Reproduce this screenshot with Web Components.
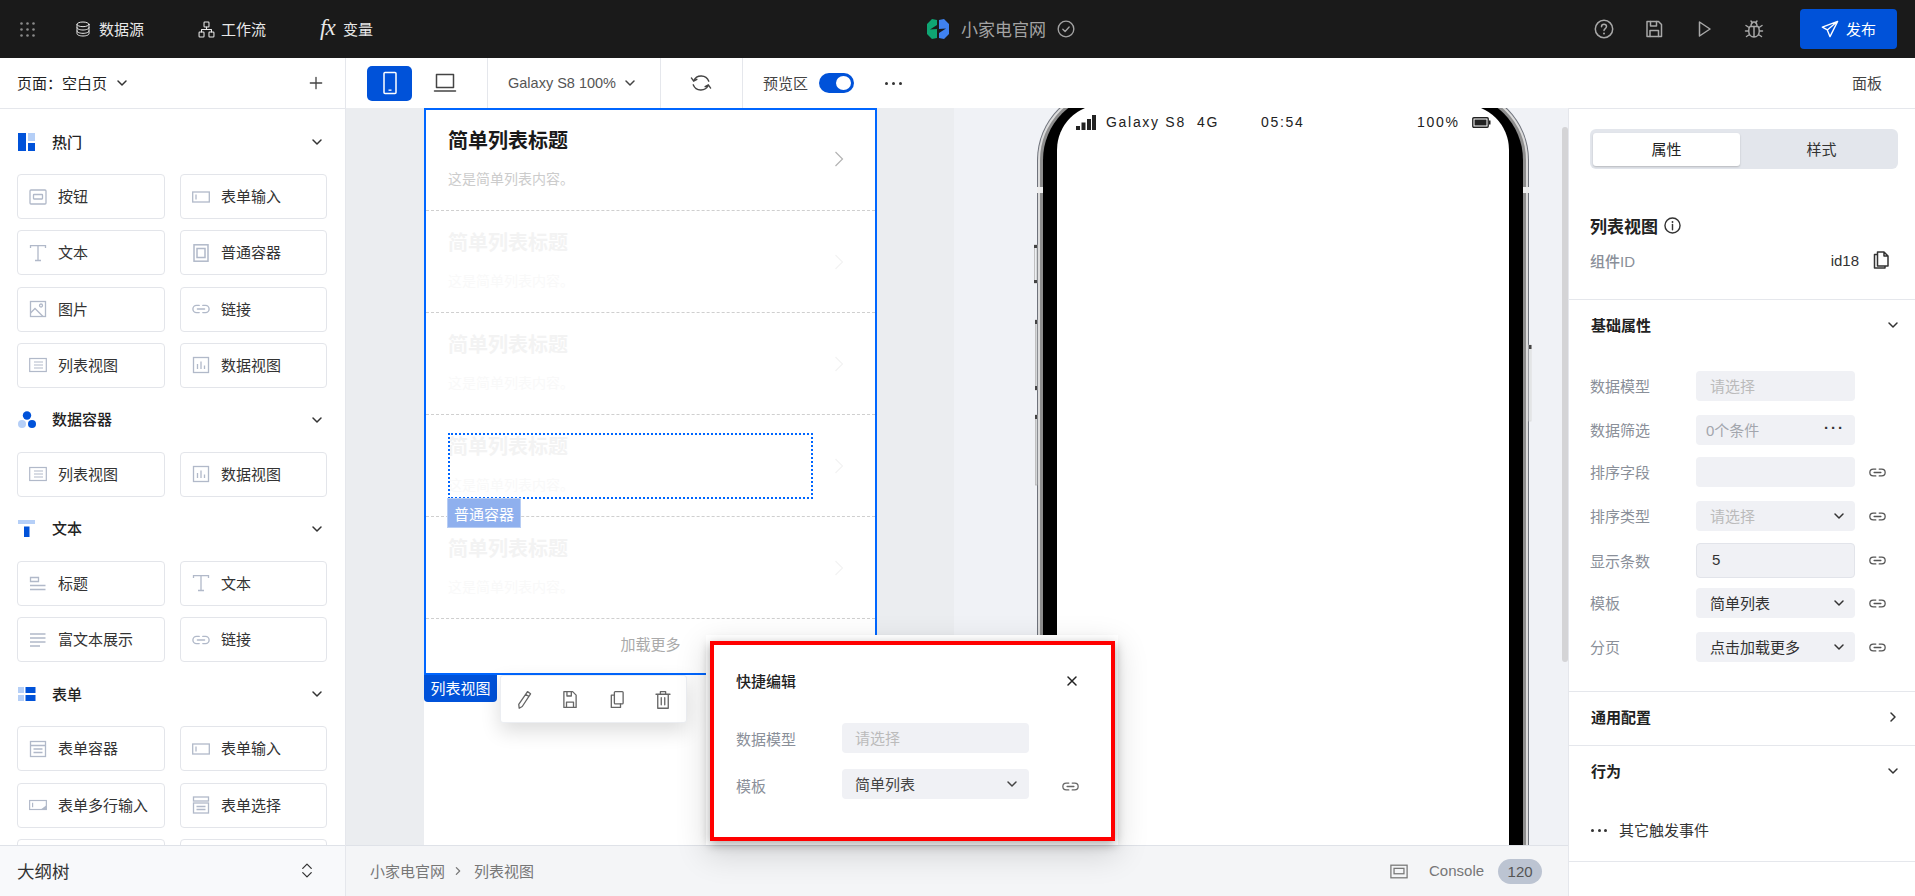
<!DOCTYPE html>
<html lang="zh"><head><meta charset="utf-8"><title>小家电官网</title>
<style>
html,body{margin:0;padding:0;width:1915px;height:896px;overflow:hidden;background:#fff;
font-family:"Liberation Sans","Noto Sans CJK SC",sans-serif;font-size:15px;color:#333}
</style></head><body>
<app-shell>
  <app-header></app-header>
  <tool-row></tool-row>
  <work-row>
    <comp-palette>
      <pal-section label="热门" icon="hot">
        <pal-card icon="btn">按钮</pal-card><pal-card icon="input">表单输入</pal-card>
        <pal-card icon="text">文本</pal-card><pal-card icon="box">普通容器</pal-card>
        <pal-card icon="image">图片</pal-card><pal-card icon="link">链接</pal-card>
        <pal-card icon="list">列表视图</pal-card><pal-card icon="chart">数据视图</pal-card>
      </pal-section>
      <pal-section label="数据容器" icon="data">
        <pal-card icon="list">列表视图</pal-card><pal-card icon="chart">数据视图</pal-card>
      </pal-section>
      <pal-section label="文本" icon="tt">
        <pal-card icon="title">标题</pal-card><pal-card icon="text">文本</pal-card>
        <pal-card icon="rich">富文本展示</pal-card><pal-card icon="link">链接</pal-card>
      </pal-section>
      <pal-section label="表单" icon="form">
        <pal-card icon="formbox">表单容器</pal-card><pal-card icon="input">表单输入</pal-card>
        <pal-card icon="area">表单多行输入</pal-card><pal-card icon="select">表单选择</pal-card>
        <pal-card></pal-card><pal-card></pal-card>
      </pal-section>
    </comp-palette>
    <center-col>
      <design-canvas>
        <list-view slot="list">
          <list-item></list-item><list-item ghost></list-item><list-item ghost></list-item><list-item ghost></list-item><list-item ghost></list-item>
        </list-view>
        <phone-frame slot="phone"></phone-frame>
      </design-canvas>
      <bottom-bar></bottom-bar>
      <quick-edit></quick-edit>
    </center-col>
    <prop-panel>
      <prop-row label="数据模型" value="请选择" kind="ph" gap="0"></prop-row>
      <prop-row label="数据筛选" value="0个条件" kind="more" gap="14"></prop-row>
      <prop-row label="排序字段" value="" kind="ph" gap="12" bind></prop-row>
      <prop-row label="排序类型" value="请选择" kind="phsel" gap="14" bind></prop-row>
      <prop-row label="显示条数" value="5" kind="num" gap="12" bind></prop-row>
      <prop-row label="模板" value="简单列表" kind="sel" gap="10" bind></prop-row>
      <prop-row label="分页" value="点击加载更多" kind="sel" gap="14" bind></prop-row>
    </prop-panel>
  </work-row>
</app-shell>
<script>
const S='fill="none" stroke="currentColor" stroke-width="1.5" stroke-linecap="round" stroke-linejoin="round"';
const I={
 grid:[15,15,()=>{let o='';for(let y of[1.5,7.5,13.5])for(let x of[1.5,7.5,13.5])o+=`<circle cx="${x}" cy="${y}" r="1.3" fill="currentColor"/>`;return o}],
 db:[24,24,`<g ${S} stroke-width="2.200"><ellipse cx="12" cy="5" rx="9" ry="3.500"/><path d="M3 5v14c0 1.900 4 3.500 9 3.500s9-1.600 9-3.500V5M3 10c0 1.900 4 3.500 9 3.500s9-1.600 9-3.500M3 15c0 1.900 4 3.500 9 3.500s9-1.600 9-3.500"/></g>`],
 flow:[24,24,`<g ${S} stroke-width="2.200"><rect x="8.500" y="1.500" width="7" height="7" rx="1"/><rect x="1.500" y="15.500" width="7" height="7" rx="1"/><rect x="15.500" y="15.500" width="7" height="7" rx="1"/><path d="M12 8.500v3.500M5 15.500V12h14v3.500"/></g>`],
 logo:[24,20,`<path d="M6 0 11 1V6L4 10.500 11 10V19L6 20 1 15V5Z" fill="#0fa573"/><path d="M18 20 13 19V14L20 9.500 13 10V1L18 0 23 5V15Z" fill="#3f82f0"/>`],
 check:[20,20,`<g ${S} stroke-width="1.300"><circle cx="10" cy="10" r="8.700"/><path d="M6.500 10.200 9 12.700l4.500-5"/></g>`],
 help:[20,20,`<g ${S} stroke-width="1.400"><circle cx="10" cy="10" r="8.700"/><path d="M7.500 7.800c0-1.500 1.100-2.500 2.500-2.500s2.500 1 2.500 2.300c0 2-2.500 2-2.500 4"/></g><circle cx="10" cy="14.500" r="1" fill="currentColor"/>`],
 save:[20,20,`<g ${S} stroke-width="1.800"><path d="M3 2.500h11.500l3 3v12H3z"/><path d="M6.500 2.500v4.500h6V2.500M6 17.500v-6h8.500v6"/></g>`],
 play:[20,20,`<path d="M5.500 3 16 10 5.500 17z" ${S} stroke-width="1.400"/>`],
 bug:[20,20,`<g ${S} stroke-width="1.400"><path d="M6 7.500h8c1 1 1.300 2.500 1.300 4.500 0 3.500-2.300 6-5.300 6s-5.300-2.500-5.300-6c0-2 .3-3.500 1.300-4.500zM7 7.500C7 4.500 8.500 3 10 3s3 1.500 3 4.500M10 7.500V18M7 2l1.500 2M13 2l-1.500 2M2 6.500l3 2M18 6.500l-3 2M1.500 12h3M18.500 12h-3M2.500 17.500l3-2M17.500 17.500l-3-2"/></g>`],
 send:[20,20,`<g ${S} stroke-width="1.500"><path d="M18.500 1.500 1.500 8l5.500 3 3 7.500zM7 11l11.500-9.500"/></g>`],
 mobile:[24,24,`<g ${S} stroke-width="1.500"><rect x="6" y="1.500" width="12" height="21" rx="1"/></g><rect x="10.500" y="18.500" width="3" height="1.300" fill="currentColor"/>`],
 laptop:[24,20,`<g ${S} stroke-width="1.300" stroke-linecap="butt"><rect x="3.500" y="1.500" width="17" height="13"/><path d="M1.500 18h21"/></g>`],
 refresh:[24,24,`<g ${S} stroke-width="1.500"><path d="M20.500 10A9 9 0 0 0 4 9.500M1.500 6.500 4 10 7.500 8M3.500 14A9 9 0 0 0 20 14.500M16.500 16l3.500-2 2.500 3.500"/></g>`],
 plus:[16,16,`<path d="M8 1.500v13M1.500 8h13" ${S} stroke-width="1.300"/>`],
 down:[12,12,`<path d="M2 4l4 4 4-4" ${S} stroke-width="1.400"/>`],
 right:[12,12,`<path d="M4 2l4 4-4 4" ${S} stroke-width="1.400"/>`],
 updown:[16,20,`<path d="M3 7.500 8 2.500l5 5M3 12.500l5 5 5-5" ${S} stroke-width="1.300"/>`],
 close:[12,12,`<path d="M2 2l8 8M10 2l-8 8" ${S} stroke-width="1.600"/>`],
 link:[20,10,`<g ${S} stroke-width="1.300"><path d="M8 1H5a4 4 0 0 0 0 8h3M12 1h3a4 4 0 0 1 0 8h-3M6 5h8"/></g>`],
 info:[18,18,`<g ${S} stroke-width="1.300"><circle cx="9" cy="9" r="8"/><path d="M9 8v5.500"/></g><circle cx="9" cy="5.300" r="1" fill="currentColor"/>`],
 copy:[16,18,`<g ${S} stroke-width="1.300" stroke-linejoin="miter"><path d="M4.500 1h6.500l4 4v10H4.500zM11 1v4h4M4.500 3.500H1.500V17H12v-2"/></g>`],
 console:[20,16,`<g fill="none" stroke="currentColor" stroke-width="1.400"><rect x="1" y="1" width="18" height="14"/><rect x="4.500" y="4.500" width="11" height="6"/></g>`],
 pencil:[20,24,`<g ${S} stroke-width="1.600"><path d="M14 3l3.500 2.500L8 20l-3.500 2L4 17.500zM12 6l3.500 2.500"/></g>`],
 floppy:[20,24,`<g ${S} stroke-width="1.600"><path d="M3 3h10l4 4v14H3z"/><path d="M6.500 3v5h5V3M6 21v-6h8v6"/></g>`],
 dup:[20,24,`<g ${S} stroke-width="1.600"><rect x="7" y="3" width="10" height="14" rx="1"/><path d="M7 7H3.500v14H14v-4"/></g>`],
 trash:[20,24,`<g ${S} stroke-width="1.600"><path d="M2 6h16M7 6V3h6v3M4 6v16h12V6M8 10v8M12 10v8"/></g>`],
 hot:[18,18,`<rect x="0" y="0" width="8" height="18" fill="#0052d9"/><rect x="10" y="0" width="7" height="8" fill="#b5cff7"/><rect x="10" y="10" width="7" height="8" fill="#0052d9"/>`],
 data:[18,18,`<circle cx="9" cy="4.500" r="4.200" fill="#0052d9"/><circle cx="4" cy="13" r="4" fill="#b5cff7"/><circle cx="14" cy="13" r="4" fill="#0052d9"/>`],
 tt:[18,18,`<rect x="0" y="0" width="17" height="4" fill="#b5cff7"/><rect x="6" y="6.500" width="5.500" height="10.500" fill="#0052d9"/>`],
 form:[18,18,`<rect x="0" y="2" width="6" height="6" fill="#b5cff7"/><rect x="0" y="10" width="6" height="6" fill="#b5cff7"/><rect x="7.500" y="2" width="10" height="6" fill="#0052d9"/><rect x="7.500" y="10" width="10" height="6" fill="#0052d9"/>`],
 btn:[18,18,`<g fill="none" stroke="currentColor" stroke-width="1.300"><rect x="1" y="2" width="16" height="14" rx="1"/><rect x="4.500" y="6.500" width="9" height="4.500" rx=".5"/></g>`],
 input:[18,18,`<g fill="none" stroke="currentColor" stroke-width="1.300"><rect x=".7" y="4" width="16.600" height="10"/><path d="M4 6.500v5"/></g>`],
 text:[18,18,`<g fill="none" stroke="currentColor" stroke-width="1.300"><path d="M1.500 4V1.700h15V4M9 1.700V16M6 16.500h6"/></g>`],
 box:[18,18,`<g fill="none" stroke="currentColor" stroke-width="1.500"><rect x="2" y=".8" width="14" height="16.400"/><rect x="5" y="4.500" width="8" height="9"/></g>`],
 image:[18,18,`<g fill="none" stroke="currentColor" stroke-width="1.300"><rect x="1.500" y="1.500" width="15" height="15"/><circle cx="12" cy="5.500" r="1.500"/><path d="M1.500 13l4.500-4.500 8 8"/></g>`],
 list:[18,18,`<g fill="none" stroke="currentColor" stroke-width="1.200"><rect x=".7" y="2.500" width="16.600" height="13"/><path d="M5 6h9M5 9h9M5 12h9"/></g>`],
 chart:[18,18,`<g fill="none" stroke="currentColor" stroke-width="1.300"><rect x="1.500" y="1.500" width="15" height="15"/><path d="M5.500 13V8M9 13V5.500M12.500 13V9.500"/></g>`],
 title:[18,18,`<g fill="none" stroke="currentColor" stroke-width="1.300"><path d="M1.500 3.500h8v4h-8zM1 11.500h15.500M1 15.500h15.500" /></g>`],
 rich:[18,18,`<path d="M1 3h15.500M1 7h15.500M1 11h15.500M1 15h10" fill="none" stroke="currentColor" stroke-width="1.300"/>`],
 formbox:[18,18,`<g fill="none" stroke="currentColor" stroke-width="1.300"><rect x="1.500" y="1.500" width="15" height="15"/><path d="M1.500 5.500h15M4.500 9h9M4.500 12.500h9"/></g>`],
 area:[20,18,`<g fill="none" stroke="currentColor" stroke-width="1.300"><rect x=".7" y="4" width="18.600" height="10"/><path d="M4 6.500v5"/></g><path d="M19 9.500V14h-6z" fill="currentColor"/>`],
 select:[18,18,`<g fill="none" stroke="currentColor" stroke-width="1.300"><rect x="1.500" y="1" width="15" height="4" /><rect x="1.500" y="7" width="15" height="10"/><path d="M4.500 10.500h9M4.500 13.500h9"/></g>`],
 signal:[20,15,`<g fill="#222"><rect x="0" y="11" width="4" height="4"/><rect x="5.500" y="7.500" width="4" height="7.500"/><rect x="11" y="4" width="4" height="11"/><rect x="16" y="0" width="4" height="15"/></g>`],
 battery:[19,11,`<rect x=".8" y=".8" width="15.400" height="9.400" rx="1" fill="none" stroke="#222" stroke-width="1.400"/><rect x="2.500" y="2.500" width="12" height="6" fill="#222"/><rect x="17" y="3.500" width="1.500" height="4" fill="#222"/>`]
};
function ic(n,w,h,c,st){const d=I[n];if(!d)return '';const b=typeof d[2]==='function'?d[2]():d[2];h=h||w;
 return `<svg xmlns="http://www.w3.org/2000/svg" width="${w}" height="${h}" viewBox="0 0 ${d[0]} ${d[1]}" style="display:block;flex:none;color:${c||'currentColor'};${st||''}">${b}</svg>`}
function def(name,css,html){customElements.define(name,class extends HTMLElement{
 connectedCallback(){if(this.shadowRoot)return;this.attachShadow({mode:'open'}).innerHTML=`<style>${css}</style>`+(typeof html==='function'?html(this):html)}})}

def('app-shell',':host{display:flex;flex-direction:column;width:1915px;height:896px;overflow:hidden}','<slot></slot>');

def('app-header',`:host{display:flex;align-items:center;height:58px;flex:none;background:#1a1a1a;color:#e6e6e6;padding-right:18px;box-sizing:border-box}
.t{color:#e8e8e8;margin-top:-2px}
.fx{font:italic 23px "Liberation Serif",serif;color:#e8e8e8;width:23px;letter-spacing:-1px;margin-top:-2px}
.brand{font-size:17px;color:#a3a3a3;margin-left:11px;margin-top:-2px}
.pub{display:flex;align-items:center;justify-content:center;gap:7px;width:97px;height:40px;border-radius:4px;background:#0052d9;color:#fff;margin-left:36px}
.pub span{margin-top:-1px}
.r{display:flex;align-items:center;gap:30px;margin-left:auto;color:#a8a8a8}`,
`${ic('grid',15,15,'#8a8a8a','margin-left:20px')}
${ic('db',16,18,'#e8e8e8','margin-left:40px')}<span class="t" style="margin-left:8px">数据源</span>
${ic('flow',17,17,'#e8e8e8','margin-left:54px')}<span class="t" style="margin-left:6px">工作流</span>
<span class="fx" style="margin-left:54px">fx</span><span class="t">变量</span>
${ic('logo',24,20,'','margin-left:553px')}<span class="brand">小家电官网</span>${ic('check',18,18,'#a3a3a3','margin-left:11px')}
<div class="r">${ic('help',20)}${ic('save',20)}${ic('play',20)}${ic('bug',20)}</div>
<div class="pub">${ic('send',18,18,'#fff')}<span>发布</span></div>`);

def('tool-row',`:host{display:flex;height:50px;flex:none;background:#fff;align-items:center}
.page{width:346px;height:50px;box-sizing:border-box;border-right:1px solid #e5e7ec;display:flex;align-items:center;padding-left:17px;color:#222;flex:none}
.page span,.tx{margin-top:-2px}
.d{width:1px;height:50px;background:#e5e7ec;flex:none}
.dev{width:45px;height:35px;background:#0052d9;border-radius:5px;display:flex;align-items:center;justify-content:center;margin-left:21px;color:#fff;flex:none}
.sw{width:35px;height:20px;border-radius:10px;background:#0052d9;margin-left:11px;position:relative;flex:none}
.sw i{position:absolute;right:3px;top:3px;width:15px;height:14px;border-radius:50%;background:#fff}
.dots{font-size:0;display:flex;gap:4px;margin-left:31px}.dots i{width:3px;height:3px;border-radius:50%;background:#333}`,
`<div class="page"><span>页面：空白页</span>${ic('down',12,12,'#333','margin-left:9px')}${ic('plus',14,14,'#444','margin-left:181px')}</div>
<div class="dev">${ic('mobile',24,24,'#fff')}</div>
${ic('laptop',24,20,'#444','margin-left:21px')}
<div class="d" style="margin-left:30px"></div>
<span style="margin-left:20px;color:#555;font-size:14.500px;width:112px;white-space:nowrap">Galaxy S8 100%</span>${ic('down',12,12,'#444','margin-left:4px')}
<div class="d" style="margin-left:24px"></div>
${ic('refresh',22,22,'#444','margin-left:29px')}
<div class="d" style="margin-left:30px"></div>
<span class="tx" style="margin-left:20px;color:#444">预览区</span><div class="sw"><i></i></div>
<div class="dots"><i></i><i></i><i></i></div>
<span class="tx" style="margin-left:auto;margin-right:33px;color:#444">面板</span>`);

def('work-row',':host{display:flex;flex:1;min-height:0}','<slot></slot>');

def('comp-palette',`:host{display:flex;flex-direction:column;width:346px;flex:none;box-sizing:border-box;border-right:1px solid #e5e7ec;border-top:1px solid #e5e7ec;height:788px;background:#fff}
.scroll{flex:1;min-height:0;overflow:hidden;padding-top:1px}
.bar{height:51px;flex:none;box-sizing:border-box;border-top:1px solid #dfe2e8;background:#f8f9fb;display:flex;align-items:center;justify-content:space-between;padding:0 31px 2px 17px;font-size:17.500px;color:#333}`,
`<div class="scroll"><slot></slot></div><div class="bar"><span>大纲树</span>${ic('updown',14,17,'#333')}</div>`);

def('pal-section',`:host{display:block;padding-left:17px}
.h{height:64px;display:flex;align-items:center;color:#222;font-weight:500;box-sizing:border-box}
.h span{margin-left:16px;flex:1;margin-top:-2px}
.g{display:grid;grid-template-columns:148px 147px;column-gap:15px;row-gap:11.330px}`,
t=>`<div class="h">${ic(t.getAttribute('icon'),18,18,'','margin-left:1px')}<span>${t.getAttribute('label')}</span>${ic('down',12,12,'#333','margin-right:22px')}</div><div class="g"><slot></slot></div>`);

def('pal-card',`:host{display:flex;align-items:center;height:45px;box-sizing:border-box;border:1px solid #e3e5ea;border-radius:4px;padding:0 0 2px 11px;color:#333;white-space:nowrap}
.s{width:18px;height:18px;margin-right:11px;flex:none;margin-top:2px}`,
t=>`<span class="s">${ic(t.getAttribute('icon')||'',18,18,'#b1b9c9')}</span><slot></slot>`);

def('center-col',':host{display:flex;flex-direction:column;width:1222px;flex:none;position:relative;z-index:2}','<slot></slot>');

def('design-canvas',`:host{display:flex;flex:1;min-height:0;background:#ebedf0;overflow:hidden}
.gut{width:78px;flex:none}.white{width:453px;flex:none;background:#fff;position:relative;z-index:2}.gut2{width:77px;flex:none}
.stage{flex:1;background:#f0f2f6;overflow:hidden;min-width:0}
.bar{width:6px;flex:none;background:#f0f2f6;padding-top:19px;box-sizing:border-box}.bar i{display:block;height:535px;background:#d4d4d6;border-radius:3px}`,
`<div class="gut"></div><div class="white"><slot name="list"></slot></div><div class="gut2"></div><div class="stage"><slot name="phone"></slot></div><div class="bar"><i></i></div>`);

def('list-view',`:host{display:block;position:relative;height:567px;box-sizing:border-box;border:2px solid #0066ff;background:#fff;overflow:visible}
.in{margin-top:-1px;height:566px}
.more{height:54px;display:flex;align-items:center;justify-content:center;color:#aaa;padding-bottom:6px;box-sizing:border-box}
.sel{position:absolute;left:22px;top:323px;width:361px;height:62px;border:2px dotted #0066ff}
.sl{position:absolute;left:21px;top:388px;width:74px;height:30px;box-sizing:border-box;background:#8fb0ee;border:1px solid #b7cdf4;color:#fff;display:flex;align-items:center;justify-content:center}
.ml{position:absolute;left:-2px;top:565px;width:73px;height:27px;background:#0052d9;color:#fff;border-radius:0 0 4px 4px;display:flex;align-items:center;justify-content:center;padding-bottom:2px;box-sizing:border-box}
.tb{position:absolute;left:74px;top:565px;width:187px;height:48px;box-sizing:border-box;background:#fff;border:1px solid #eceef2;border-radius:3px;box-shadow:0 8px 20px rgba(0,0,0,.14);display:flex;align-items:center;justify-content:space-between;padding:0 14px;color:#666}`,
`<div class="in"><slot></slot><div class="more">加载更多</div></div>
<div class="sel"></div><div class="sl">普通容器</div><div class="ml">列表视图</div>
<div class="tb">${ic('pencil',18,21)}${ic('floppy',18,21)}${ic('dup',18,21)}${ic('trash',18,21)}</div>`);

def('list-item',`:host{display:block;height:102px;box-sizing:border-box;border-bottom:1px dashed #cfcfcf;position:relative;padding:0 0 0 22px}
.a{font-size:20px;font-weight:700;color:#1a1a1a;line-height:28px;padding-top:18px;white-space:nowrap}
.b{font-size:14px;color:#ccc;line-height:20px;padding-top:14px;white-space:nowrap}
.c{position:absolute;right:31px;top:42px}
:host([ghost]) .a{color:#f3f3f3}:host([ghost]) .b{color:#f9f9f9}:host([ghost]) .c{top:43px}`,
t=>`<div class="a">简单列表标题</div><div class="b">这是简单列表内容。</div><svg class="c" width="10" height="16" viewBox="0 0 10 16"><path d="M1.500 1 8.500 8l-7 7" fill="none" stroke="${t.hasAttribute('ghost')?'#f3f3f3':'#b3b3b3'}" stroke-width="1.200"/></svg>`);

def('phone-frame',`:host{display:block;position:relative;width:500px;height:800px;margin-left:79px;margin-top:-20px}
.st{position:absolute;left:43px;top:25px;width:415px;height:18px;display:flex;align-items:center;font-size:14px;letter-spacing:1.700px;color:#222;white-space:nowrap}`,
`<svg width="500" height="800" viewBox="0 0 500 800" style="display:block">
<rect x="4" y="0" width="492" height="900" rx="72" fill="#6f737c"/>
<rect x="5" y="1" width="490" height="900" rx="71" fill="#dcdcdc"/>
<rect x="7" y="3" width="486" height="900" rx="69" fill="#8e8e8e"/>
<rect x="10" y="6" width="480" height="900" rx="66" fill="#000"/>
<rect x="24" y="16.500" width="452" height="900" rx="45.500" fill="#fff"/>
<rect x="4" y="99" width="6" height="6" fill="#eee"/><rect x="490" y="99" width="6" height="6" fill="#eee"/>
<g fill="#eceef1" stroke="#b5b5b5" stroke-width=".8"><rect x="1.500" y="157" width="2.500" height="38"/><rect x="2.500" y="232" width="1.500" height="70"/><rect x="2.500" y="327" width="1.500" height="70"/><rect x="496" y="257" width="2" height="76" stroke="#d8d8d8"/></g>
<g fill="#444"><rect x="1" y="157" width="3" height="3"/><rect x="1" y="192" width="3" height="3"/><rect x="2" y="232" width="2" height="4"/><rect x="2" y="298" width="2" height="4"/><rect x="2" y="327" width="2" height="4"/><rect x="496" y="257" width="2.500" height="4"/></g>
</svg>
<div class="st">${ic('signal',20,15)}<span style="margin-left:10px;width:155px">Galaxy S8&nbsp;&nbsp;4G</span><span style="width:156px">05:54</span><span style="width:55px">100%</span>${ic('battery',19,11)}</div>`);

def('bottom-bar',`:host{display:flex;align-items:center;height:51px;flex:none;box-sizing:border-box;border-top:1px solid #dfe2e8;background:#f4f5f7;padding:0 0 2px 24px;color:#777}
.b{width:44px;height:25px;border-radius:13px;background:#bcc4d2;color:#555;display:flex;align-items:center;justify-content:center;margin-left:14px;margin-top:2px}`,
`<span>小家电官网</span>${ic('right',10,10,'#777','margin:2px 11px 0 8px')}<span>列表视图</span>
${ic('console',18,15,'#777','margin-left:856px;margin-top:2px')}<span style="margin-left:21px">Console</span><span class="b">120</span>`);

def('quick-edit',`:host{position:absolute;left:360px;top:527px;width:412px;height:210px;background:#fff;box-shadow:0 10px 30px rgba(0,0,0,.14);z-index:5;display:block}
.red{margin:6px 3px 0 4px;height:200px;box-sizing:border-box;border:4px solid #f00;box-shadow:0 3px 10px rgba(0,0,0,.35);padding:0 0 0 22px}
.h{display:flex;align-items:center;justify-content:space-between;height:32px;margin-top:20px;font-weight:500;color:#222;padding-right:33px}
.h span{margin-top:-2px}
.r{display:flex;align-items:center;height:30px;color:#8a8f99}
.r b{font-weight:400;width:106px;flex:none}
.v{width:187px;height:30px;border-radius:4px;background:#f0f1f5;display:flex;align-items:center;justify-content:space-between;padding:0 11px 0 13px;box-sizing:border-box}
.v span{margin-top:-2px}`,
`<div class="red"><div class="h"><span>快捷编辑</span>${ic('close',12,12,'#222')}</div>
<div class="r" style="margin-top:26px"><b>数据模型</b><div class="v" style="color:#bbb"><span>请选择</span></div></div>
<div class="r" style="margin-top:16px"><b style="padding-top:2px">模板</b><div class="v" style="color:#444"><span>简单列表</span>${ic('down',12,12,'#444')}</div>${ic('link',17,9,'#666','margin-left:33px;margin-top:4px')}</div></div>`);

def('prop-panel',`:host{display:block;width:347px;flex:none;box-sizing:border-box;border-left:1px solid #e5e7ec;border-top:1px solid #e5e7ec;height:788px;background:#fff;color:#333;overflow:hidden}
.top{height:191px;box-sizing:border-box;border-bottom:1px solid #e5e7ec;padding:20px 17px 0 21px}
.tabs{display:flex;height:40px;background:#e3e6ec;border-radius:6px;padding:4px 3px 3px;box-sizing:border-box}
.tabs div{flex:1;display:flex;align-items:center;justify-content:center;color:#333;padding-bottom:2px;padding-left:8px}
.tabs .on{flex:none;width:147px;background:#fff;border-radius:3px;box-shadow:0 1px 2px rgba(0,0,0,.2);color:#222;padding-left:0}
.nm{display:flex;align-items:center;gap:6px;font-size:17px;font-weight:700;color:#222;margin-top:45px;height:22px}
.id{display:flex;align-items:center;margin-top:14px;margin-right:9px;height:20px;color:#8a8f99;font-weight:500}
.id em{font-style:normal;font-weight:400;color:#333;margin-left:auto}
.sec{box-sizing:border-box;border-bottom:1px solid #e5e7ec;padding:0 16px 0 22px}
.hd{display:flex;align-items:center;justify-content:space-between;font-weight:700;color:#222;height:50px;padding-bottom:1px;box-sizing:border-box}
.ev{display:flex;align-items:center;color:#333;margin-top:23px}
.ev i{display:flex;gap:3.500px;width:28px;margin-top:2px}.ev i u{width:3px;height:3px;border-radius:50%;background:#333}`,
`<div class="top"><div class="tabs"><div class="on">属性</div><div>样式</div></div>
<div class="nm"><span>列表视图</span>${ic('info',17,17,'#333')}</div>
<div class="id"><span>组件ID</span><em>id18</em>${ic('copy',16,18,'#333','margin-left:14px')}</div></div>
<div class="sec" style="height:392px"><div class="hd">基础属性${ic('down',12,12,'#333')}</div><div style="margin-top:21px;margin-left:-1px"><slot></slot></div></div>
<div class="sec" style="height:54px"><div class="hd">通用配置${ic('right',12,12,'#333')}</div></div>
<div class="sec" style="height:116px"><div class="hd">行为${ic('down',12,12,'#333')}</div><div class="ev"><i><u></u><u></u><u></u></i>其它触发事件</div></div>`);

def('prop-row',`:host{display:flex;align-items:center;color:#8a8f99}
b{font-weight:400;width:106px;flex:none;margin-top:-1px}
.v{width:159px;border-radius:4px;background:#f0f1f5;display:flex;align-items:center;justify-content:space-between;padding:0 10px 0 14px;box-sizing:border-box;flex:none;white-space:nowrap}
.v span{margin-top:-2px}`,
t=>{const k=t.getAttribute('kind'),val=t.getAttribute('value');t.style.marginTop=t.getAttribute('gap')+'px';
 const col=k==='ph'||k==='phsel'?'#bbb':k==='more'?'#a3a6ad':'#333';
 const h=k==='num'?35:30;
 const extra=k==='num'?'border:1px solid #e2e4ea;padding-left:15px;':'';
 const tail=k==='phsel'||k==='sel'?ic('down',12,12,'#333'):k==='more'?'<span style="letter-spacing:2px;color:#333;font-weight:700;margin-top:-5px">···</span>':'';
 return `<b>${t.getAttribute('label')}</b><div class="v" style="height:${h}px;color:${col};${extra}${k==='more'?'padding-left:10px;':''}"><span>${val}</span>${tail}</div>${t.hasAttribute('bind')?ic('link',17,9,'#555','margin-left:14px'):''}`});
</script>
</body></html>
